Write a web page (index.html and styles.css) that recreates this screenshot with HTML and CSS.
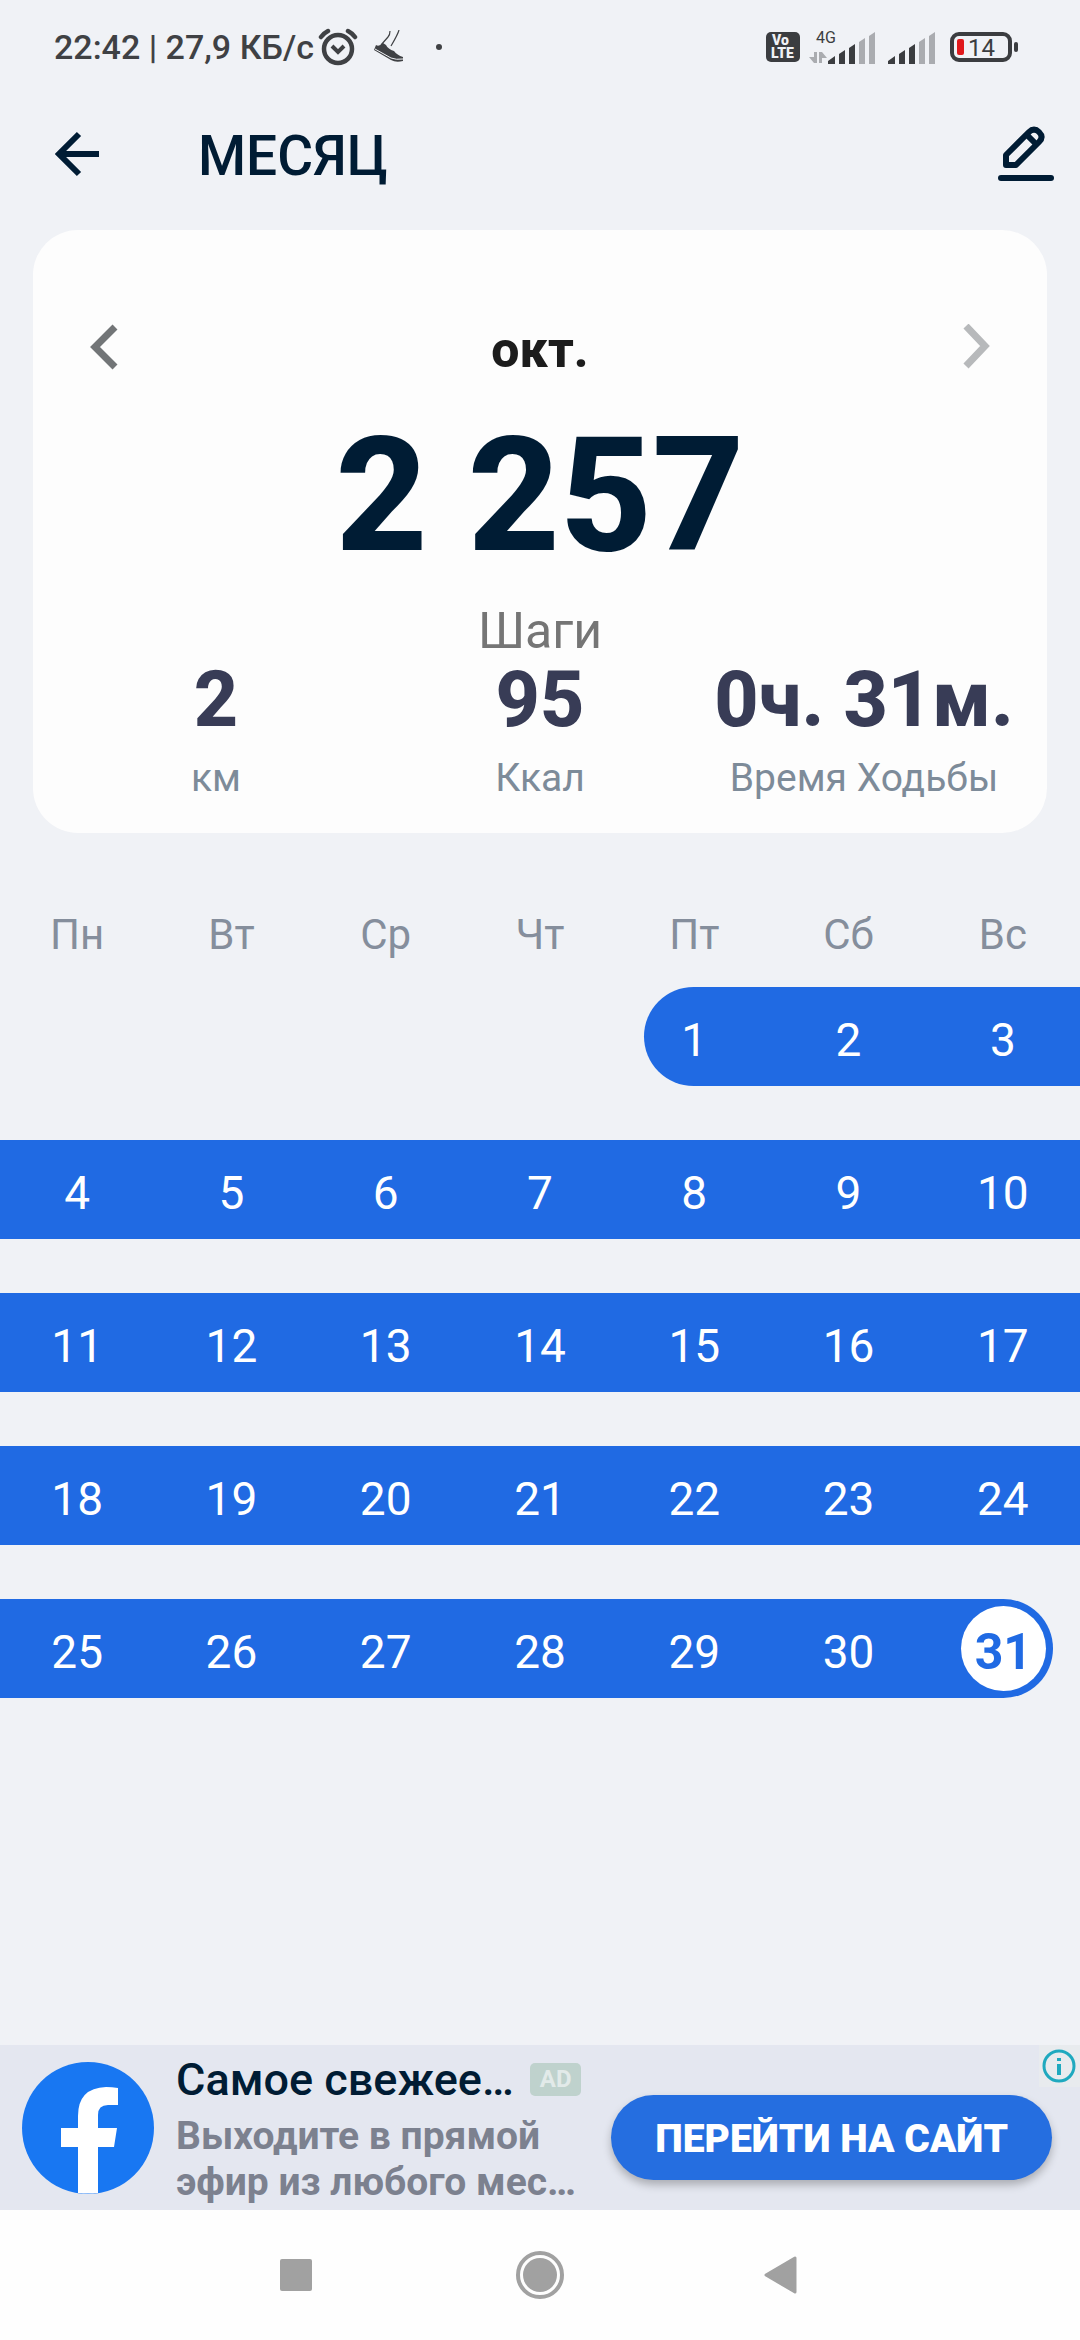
FILE: index.html
```html
<!DOCTYPE html>
<html lang="ru">
<head>
<meta charset="utf-8">
<meta name="viewport" content="width=device-width, initial-scale=1">
<title>Месяц</title>
<link rel="stylesheet" href="styles.css">
</head>
<body>
<div class="status">
  <div class="status-side">
    <span class="status-text">22:42 | 27,9 КБ/с</span>
    <svg class="alarm" width="40" height="38" viewBox="0 0 40 38" fill="none" stroke="#3f4144">
      <circle cx="20" cy="21" r="14" stroke-width="4.5"/>
      <path d="M14 18l6 6 6-6" stroke-width="4"/>
      <path d="M3 9q3-4 7-6M37 9q-3-4-7-6" stroke-width="4.5" stroke-linecap="round"/>
    </svg>
    <svg class="shoe" width="30" height="34" viewBox="0 0 30 34">
      <path d="M16 1q0 4-2 6l-7 8M25 0q-1 4-8 16" fill="none" stroke="#3f4144" stroke-width="1.2"/>
      <path d="M2 15q3 2 7-2l3 2q2 4 8 6q3 4 9 6l0 4q-7 2-12-1L0 20z" fill="#3f4144"/>
      <path d="M1 19l16 9q5 2 12 1" fill="none" stroke="#f0f2f6" stroke-width="1"/>
    </svg>
    <span class="dot"></span>
  </div>
  <div class="status-side">
    <svg class="volte" width="34" height="30" viewBox="0 0 34 30">
      <rect width="34" height="30" rx="5" fill="#3b3d40"/>
      <text x="6" y="13" class="volte-text">Vo</text>
      <text x="5" y="26" class="volte-text">LTE</text>
    </svg>
    <svg class="signal" width="68" height="38" viewBox="0 -4 68 38">
      <text x="7" y="11" class="net-text">4G</text>
      <path d="M5 20h3v11H5l-5-6h5zM10 31V20h3l5 6h-5v5z" fill="#aaacb0"/>
      <path d="M19 32v-3l7-5v8zM30 32V22l6-4v14zM40 32V16l6-4v20z" fill="#3b3d40"/>
      <path d="M50 32V10l6-4v26zM60 32V4l6-4v32z" fill="#aaacb0"/>
    </svg>
    <svg class="signal-2" width="48" height="38" viewBox="0 -4 48 38">
      <path d="M0 32v-3l7-5v8zM11 32V22l6-4v14zM21 32V16l6-4v20z" fill="#3b3d40"/>
      <path d="M31 32V10l6-4v26zM41 32V4l6-4v32z" fill="#aaacb0"/>
    </svg>
    <svg width="68" height="30" viewBox="0 0 68 30">
      <rect x="2" y="2" width="58" height="26" rx="7" fill="none" stroke="#3b3d40" stroke-width="4"/>
      <rect x="64" y="10" width="4" height="10" rx="2" fill="#3b3d40"/>
      <rect x="7" y="7" width="7" height="16" rx="2" fill="#e0191c"/>
      <text x="18" y="24" class="battery-text">14</text>
    </svg>
  </div>
</div>

<header class="bar">
  <button class="icon-button" aria-label="Назад">
    <svg width="46" height="46" viewBox="0 0 46 46" fill="none" stroke="#001c34" stroke-width="6"><path d="M45 23H5M25 3L5 23l20 20"/></svg>
  </button>
  <h1 class="title">МЕСЯЦ</h1>
  <button class="icon-button" aria-label="Изменить">
    <svg width="56" height="56" viewBox="0 0 56 56" fill="none" stroke="#001c34" stroke-linejoin="round" stroke-linecap="round">
      <path d="M8 29L31 6q5-5 10 0t0 10L18 39H8z" stroke-width="6"/>
      <path d="M29 9l9 9" stroke-width="6"/>
      <path d="M3 52h50" stroke-width="6"/>
    </svg>
  </button>
</header>

<main class="main">
  <section class="card">
    <div class="month">
      <button class="icon-button" aria-label="Предыдущий месяц">
        <svg width="28" height="52" viewBox="0 0 28 52" fill="none" stroke="#727577" stroke-width="7"><path d="M25 3L5 23l20 20"/></svg>
      </button>
      <h2 class="month-name">окт.</h2>
      <button class="icon-button" aria-label="Следующий месяц">
        <svg width="28" height="52" viewBox="0 0 28 52" fill="none" stroke="#b7b9bb" stroke-width="7"><path d="M4 2l19 20L4 42"/></svg>
      </button>
    </div>
    <div class="steps">2 257</div>
    <div class="steps-label">Шаги</div>
    <dl class="stats">
      <div class="stat"><dt>км</dt><dd>2</dd></div>
      <div class="stat"><dt>Ккал</dt><dd>95</dd></div>
      <div class="stat"><dt>Время Ходьбы</dt><dd>0ч. 31м.</dd></div>
    </dl>
  </section>

  <table class="calendar">
    <thead>
      <tr><th>Пн</th><th>Вт</th><th>Ср</th><th>Чт</th><th>Пт</th><th>Сб</th><th>Вс</th></tr>
    </thead>
    <tbody>
      <tr><td></td><td></td><td></td><td></td><td><div class="day first">1</div></td><td><div class="day">2</div></td><td><div class="day">3</div></td></tr>
      <tr><td><div class="day">4</div></td><td><div class="day">5</div></td><td><div class="day">6</div></td><td><div class="day">7</div></td><td><div class="day">8</div></td><td><div class="day">9</div></td><td><div class="day">10</div></td></tr>
      <tr><td><div class="day">11</div></td><td><div class="day">12</div></td><td><div class="day">13</div></td><td><div class="day">14</div></td><td><div class="day">15</div></td><td><div class="day">16</div></td><td><div class="day">17</div></td></tr>
      <tr><td><div class="day">18</div></td><td><div class="day">19</div></td><td><div class="day">20</div></td><td><div class="day">21</div></td><td><div class="day">22</div></td><td><div class="day">23</div></td><td><div class="day">24</div></td></tr>
      <tr><td><div class="day">25</div></td><td><div class="day">26</div></td><td><div class="day">27</div></td><td><div class="day">28</div></td><td><div class="day">29</div></td><td><div class="day">30</div></td><td><div class="day last"><span class="today">31</span></div></td></tr>
    </tbody>
  </table>
</main>

<aside class="ad">
  <svg class="logo" width="132" height="132" viewBox="0 0 132 132">
    <circle cx="66" cy="66" r="66" fill="#1877f2"/>
    <path d="M56 131V85H39V66h17V54q0-28 28-29 6 0 12 1v17H86q-10 0-10 10v13h19l-3 19H76v46q-10 1-20 0z" fill="#fff"/>
  </svg>
  <div class="ad-copy">
    <div class="ad-head"><span class="ad-title">Самое свежее…</span><span class="ad-badge">AD</span></div>
    <p class="ad-text">Выходите в прямой<br>эфир из любого мес…</p>
  </div>
  <button class="ad-action">ПЕРЕЙТИ НА САЙТ</button>
  <a class="ad-info" href="#" aria-label="О рекламе">
    <svg width="34" height="34" viewBox="0 0 34 34" fill="none" stroke="#1fa9bf">
      <circle cx="17" cy="17" r="15" stroke-width="3"/>
      <path d="M17 15v11M17 9v3" stroke-width="4"/>
    </svg>
  </a>
</aside>

<nav class="nav">
  <button class="icon-button" aria-label="Недавние"><svg width="50" height="50" viewBox="0 0 50 50"><rect x="9" y="9" width="32" height="32" rx="2" fill="#a1a1a1"/></svg></button>
  <button class="icon-button" aria-label="Домой"><svg width="50" height="50" viewBox="0 0 50 50"><circle cx="25" cy="25" r="22" fill="none" stroke="#a1a1a1" stroke-width="4"/><circle cx="25" cy="25" r="17" fill="#a1a1a1"/></svg></button>
  <button class="icon-button" aria-label="Назад"><svg width="50" height="50" viewBox="0 0 50 50"><path d="M7 25L36 8v34z" fill="#a1a1a1" stroke="#a1a1a1" stroke-width="3" stroke-linejoin="round"/></svg></button>
</nav>
</body>
</html>
```
FILE: styles.css
```css
* { box-sizing: border-box; }

body {
  margin: 0;
  min-height: 100vh;
  display: flex;
  flex-direction: column;
  background: #f0f2f6;
  color: #001c34;
  font-family: Roboto, "Noto Sans", sans-serif;
}

h1, h2, p, dl, dd { margin: 0; }
svg { display: block; flex: none; }

.icon-button {
  display: block;
  padding: 0;
  border: 0;
  background: none;
}

/* Status bar */
.status {
  display: flex;
  justify-content: space-between;
  height: 94px;
  padding: 0 62px 0 54px;
  color: #3f4144;
}
.status-side { display: flex; align-items: center; }
.status-text { font-size: 34px; line-height: 40px; font-weight: 500; }
.alarm { margin-left: 4px; }
.shoe { margin-left: 16px; }
.dot {
  width: 6px;
  height: 6px;
  margin-left: 32px;
  border-radius: 50%;
  background: #3f4144;
}
.volte { margin-right: 9px; }
.volte-text { fill: #f0f2f6; font-size: 14px; font-weight: 900; }
.signal { margin-right: 11px; }
.signal-2 { margin-right: 14px; }
.net-text { fill: #3b3d40; font-size: 16px; }
.battery-text { fill: #3b3d40; font-size: 24px; }

/* Title bar */
.bar {
  display: flex;
  align-items: center;
  height: 120px;
  padding: 0 26px 0 54px;
}
.title {
  flex: 1;
  margin-left: 98px;
  padding-top: 4px;
  font-size: 55px;
  line-height: 64px;
  font-weight: 500;
}

.main { flex: 1; }

/* Month summary */
.card {
  margin: 16px 33px 0;
  padding: 90px 0 17px;
  border-radius: 45px;
  background: #fdfdfd;
  text-align: center;
}
.month {
  display: flex;
  align-items: center;
  justify-content: space-between;
  padding: 0 57px;
}
.month-name { color: #1c1c1c; font-size: 50px; line-height: 60px; font-weight: 800; }
.steps { margin-top: 20px; font-size: 160px; line-height: 192px; font-weight: 800; }
.steps-label { margin-top: 10px; color: #757575; font-size: 50px; line-height: 58px; }
.stats {
  display: grid;
  grid-template-columns: repeat(3, 1fr);
  padding: 0 21px;
}
.stat { display: flex; flex-direction: column-reverse; }
.stat dt { color: #7d8b99; font-size: 39px; line-height: 76px; }
.stat dd { color: #383c56; font-size: 77px; line-height: 80px; font-weight: 800; white-space: nowrap; }

/* Calendar */
.calendar {
  width: 100%;
  margin-top: 70px;
  border-collapse: collapse;
  table-layout: fixed;
  text-align: center;
}
.calendar th {
  height: 84px;
  padding: 0;
  vertical-align: top;
  color: #858e9c;
  font-size: 42px;
  line-height: 64px;
  font-weight: 400;
}
.calendar td { height: 153px; padding: 0; vertical-align: top; }
.day {
  height: 99px;
  padding-top: 4px;
  background: #206ae3;
  color: #fff;
  font-size: 46px;
  line-height: 99px;
}
.first {
  margin-left: calc(50% - 50px);
  padding-right: calc(50% - 50px);
  border-radius: 50px 0 0 50px;
}
.last {
  display: flex;
  justify-content: flex-end;
  margin-right: calc(50% - 50px);
  padding: 7px;
  border-radius: 0 50px 50px 0;
}
.today {
  width: 85px;
  height: 85px;
  padding-top: 4px;
  border-radius: 50%;
  background: #fff;
  color: #206ae3;
  font-size: 50px;
  line-height: 85px;
  font-weight: 700;
}

/* Advertisement */
.ad {
  position: relative;
  display: flex;
  align-items: center;
  height: 165px;
  padding: 0 28px 0 22px;
  background: #e4e7f0;
}
.ad-copy { flex: 1; margin-left: 22px; }
.ad-head { display: flex; align-items: center; gap: 16px; }
.ad-title { font-size: 45px; line-height: 58px; font-weight: 500; white-space: nowrap; }
.ad-badge {
  padding: 0 10px;
  border-radius: 5px;
  background: #bfd2cd;
  color: #e2eae9;
  font-size: 24px;
  line-height: 33px;
  font-weight: 700;
}
.ad-text { padding-top: 4px; color: #7c818f; font-size: 39px; line-height: 46px; font-weight: 700; white-space: nowrap; }
.ad-action {
  height: 85px;
  margin-top: 20px;
  padding: 2px 44px 0;
  border: 0;
  border-radius: 43px;
  background: #256ee0;
  box-shadow: 0 5px 8px rgba(0, 0, 0, 0.25);
  color: #fff;
  font-family: inherit;
  font-size: 39px;
  font-weight: 900;
  white-space: nowrap;
}
.ad-info {
  position: absolute;
  top: 0;
  right: 0;
  padding: 4px 4px 4px 3px;
  background: #e8ebee;
}

/* System navigation */
.nav {
  display: flex;
  align-items: center;
  justify-content: center;
  gap: 194px;
  height: 130px;
  background: #fefefe;
}
```
